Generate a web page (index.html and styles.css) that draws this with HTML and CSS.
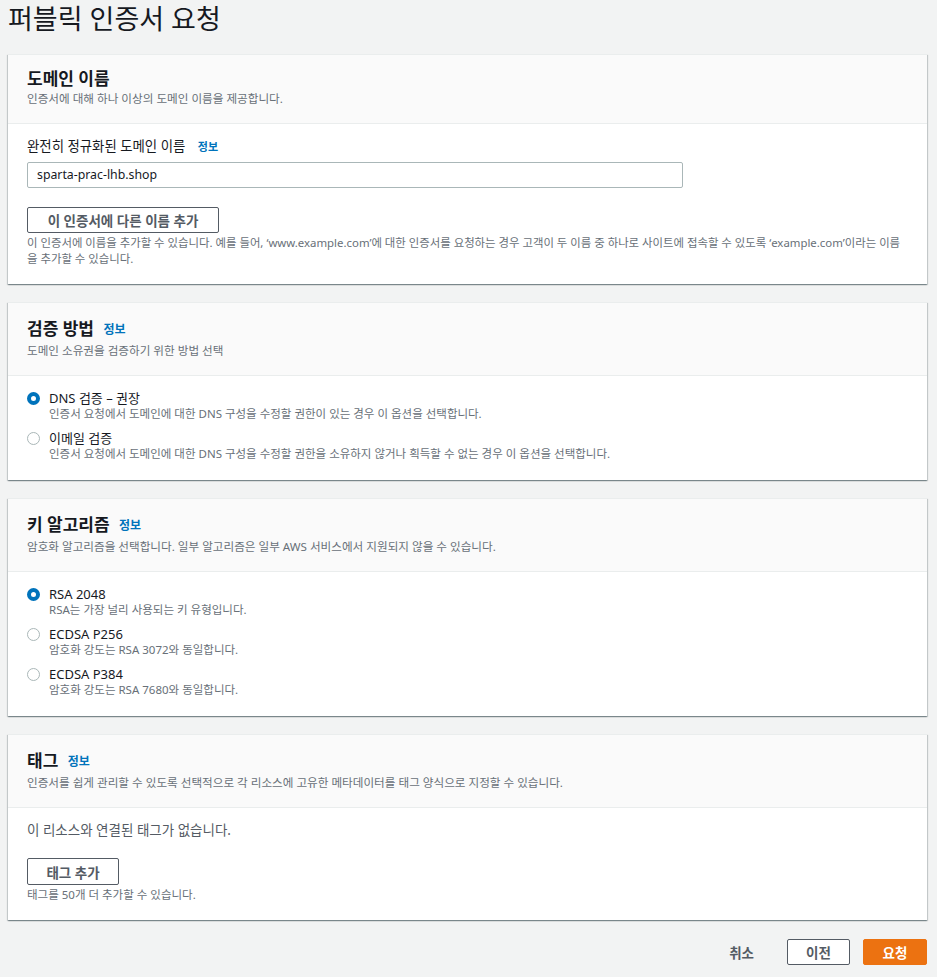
FILE: index.html
```html
<!DOCTYPE html>
<html lang="ko">
<head>
<meta charset="utf-8">
<title>퍼블릭 인증서 요청</title>
<link rel="stylesheet" href="styles.css">
</head>
<body>
<div class="page">
  <h1 class="page-title">퍼블릭 인증서 요청</h1>

  <section class="card">
    <div class="card-header">
      <h2 class="card-title">도메인 이름</h2>
      <p class="card-desc">인증서에 대해 하나 이상의 도메인 이름을 제공합니다.</p>
    </div>
    <div class="card-body body-domain">
      <div class="field-label">완전히 정규화된 도메인 이름 <a class="info">정보</a></div>
      <div class="input">sparta-prac-lhb.shop</div>
      <button class="btn btn-wide">이 인증서에 다른 이름 추가</button>
      <p class="help help-wrap">이 인증서에 이름을 추가할 수 있습니다. 예를 들어, ‘www.example.com’에 대한 인증서를 요청하는 경우 고객이 두 이름 중 하나로 사이트에 접속할 수 있도록 ‘example.com’이라는 이름을 추가할 수 있습니다.</p>
    </div>
  </section>

  <section class="card">
    <div class="card-header">
      <h2 class="card-title has-info">검증 방법 <a class="info">정보</a></h2>
      <p class="card-desc">도메인 소유권을 검증하기 위한 방법 선택</p>
    </div>
    <div class="card-body options">
      <div class="option">
        <span class="radio checked"></span>
        <div class="option-text">
          <div class="option-label">DNS 검증 – 권장</div>
          <div class="option-desc">인증서 요청에서 도메인에 대한 DNS 구성을 수정할 권한이 있는 경우 이 옵션을 선택합니다.</div>
        </div>
      </div>
      <div class="option">
        <span class="radio"></span>
        <div class="option-text">
          <div class="option-label">이메일 검증</div>
          <div class="option-desc">인증서 요청에서 도메인에 대한 DNS 구성을 수정할 권한을 소유하지 않거나 획득할 수 없는 경우 이 옵션을 선택합니다.</div>
        </div>
      </div>
    </div>
  </section>

  <section class="card">
    <div class="card-header">
      <h2 class="card-title has-info">키 알고리즘 <a class="info">정보</a></h2>
      <p class="card-desc">암호화 알고리즘을 선택합니다. 일부 알고리즘은 일부 AWS 서비스에서 지원되지 않을 수 있습니다.</p>
    </div>
    <div class="card-body options">
      <div class="option">
        <span class="radio checked"></span>
        <div class="option-text">
          <div class="option-label">RSA 2048</div>
          <div class="option-desc">RSA는 가장 널리 사용되는 키 유형입니다.</div>
        </div>
      </div>
      <div class="option">
        <span class="radio"></span>
        <div class="option-text">
          <div class="option-label">ECDSA P256</div>
          <div class="option-desc">암호화 강도는 RSA 3072와 동일합니다.</div>
        </div>
      </div>
      <div class="option">
        <span class="radio"></span>
        <div class="option-text">
          <div class="option-label">ECDSA P384</div>
          <div class="option-desc">암호화 강도는 RSA 7680와 동일합니다.</div>
        </div>
      </div>
    </div>
  </section>

  <section class="card">
    <div class="card-header">
      <h2 class="card-title has-info">태그 <a class="info">정보</a></h2>
      <p class="card-desc">인증서를 쉽게 관리할 수 있도록 선택적으로 각 리소스에 고유한 메타데이터를 태그 양식으로 지정할 수 있습니다.</p>
    </div>
    <div class="card-body body-tags">
      <p class="empty">이 리소스와 연결된 태그가 없습니다.</p>
      <button class="btn btn-tag">태그 추가</button>
      <p class="help">태그를 50개 더 추가할 수 있습니다.</p>
    </div>
  </section>

  <div class="actions">
    <button class="btn-link">취소</button>
    <button class="btn btn-action">이전</button>
    <button class="btn btn-primary">요청</button>
  </div>
</div>
</body>
</html>
```

FILE: styles.css
```css
* { box-sizing: border-box; }
html, body { margin: 0; padding: 0; background: #f2f3f3; }
body {
  font-family: "Noto Sans", "Noto Sans CJK KR", sans-serif;
  color: #16191f;
  font-size: 14px;
}
.page { width: 927px; padding: 0 0 0 8px; }
.page-title {
  margin: 0;
  height: 54px;
  font-size: 27px;
  line-height: 38px;
  font-weight: 400;
  color: #16191f;
}
.card {
  background: #fff;
  margin-bottom: 18px;
  box-shadow: 0 1px 1px 0 rgba(0,28,36,.3), 1px 1px 1px 0 rgba(0,28,36,.15), -1px 1px 1px 0 rgba(0,28,36,.15);
  border-top: 1px solid #eaeded;
}
.card-header {
  background: #fafafa;
  border-bottom: 1px solid #eaeded;
  padding: 12px 20px 16px 19px;
}
.card-title {
  margin: 0;
  font-size: 17px;
  line-height: 24px;
  font-weight: 700;
  color: #16191f;
}
.card-title.has-info { line-height: 27px; }
.info {
  font-size: 12px;
  font-weight: 700;
  color: #0073bb;
  margin-left: 5px;
  vertical-align: 1px;
}
.card-desc {
  margin: 0;
  font-size: 11.6px;
  line-height: 16px;
  color: #687078;
}
.card-body { padding: 12px 20px 18px 19px; }
.body-domain { padding-bottom: 17px; }
.field-label { font-size: 13.4px; line-height: 20px; }
.field-label .info { margin-left: 9px; vertical-align: 0; font-size: 11px; }
.input {
  margin-top: 5px;
  width: 656px;
  height: 26px;
  border: 1px solid #aab7b8;
  border-radius: 2px;
  padding: 0 9px;
  font-size: 12.3px;
  line-height: 24px;
}
.btn {
  font-family: inherit;
  background: #fff;
  border: 1px solid #545b64;
  border-radius: 2px;
  color: #545b64;
  font-weight: 700;
  font-size: 13.5px;
  height: 26px;
  padding: 0;
  cursor: pointer;
}
.btn-wide { width: 192px; margin-top: 19px; display: block; }
.help {
  margin: 2px 0 0;
  font-size: 11.5px;
  line-height: 16px;
  color: #687078;
}
.help-wrap { font-size: 11.4px; }
.options { padding-top: 13px; padding-bottom: 19px; display: flex; flex-direction: column; gap: 8px; }
.option { display: flex; align-items: flex-start; }
.radio {
  flex: none;
  width: 13px;
  height: 13px;
  border-radius: 50%;
  border: 1px solid #aab7b8;
  margin-top: 3px;
  margin-right: 9px;
  background: #fff;
}
.radio.checked { border: 4px solid #0073bb; }
.option-label { font-size: 13px; line-height: 18px; }
.option-desc { font-size: 11.5px; line-height: 14px; color: #687078; }
.body-tags { padding-top: 12px; padding-bottom: 17px; }
.empty { margin: 0; font-size: 13.5px; line-height: 20px; color: #545b64; }
.btn-tag { width: 92px; height: 27px; margin-top: 18px; display: block; }
.actions {
  display: flex;
  justify-content: flex-end;
  align-items: center;
  gap: 13px;
  padding-top: 1px;
}
.btn-link {
  font-family: inherit;
  background: none;
  border: none;
  color: #545b64;
  font-weight: 700;
  font-size: 13.5px;
  margin-right: 14px;
}
.btn-action { width: 63px; }
.btn-primary { width: 64px; background: #ec7211; border-color: #ec7211; color: #fff; }
```
